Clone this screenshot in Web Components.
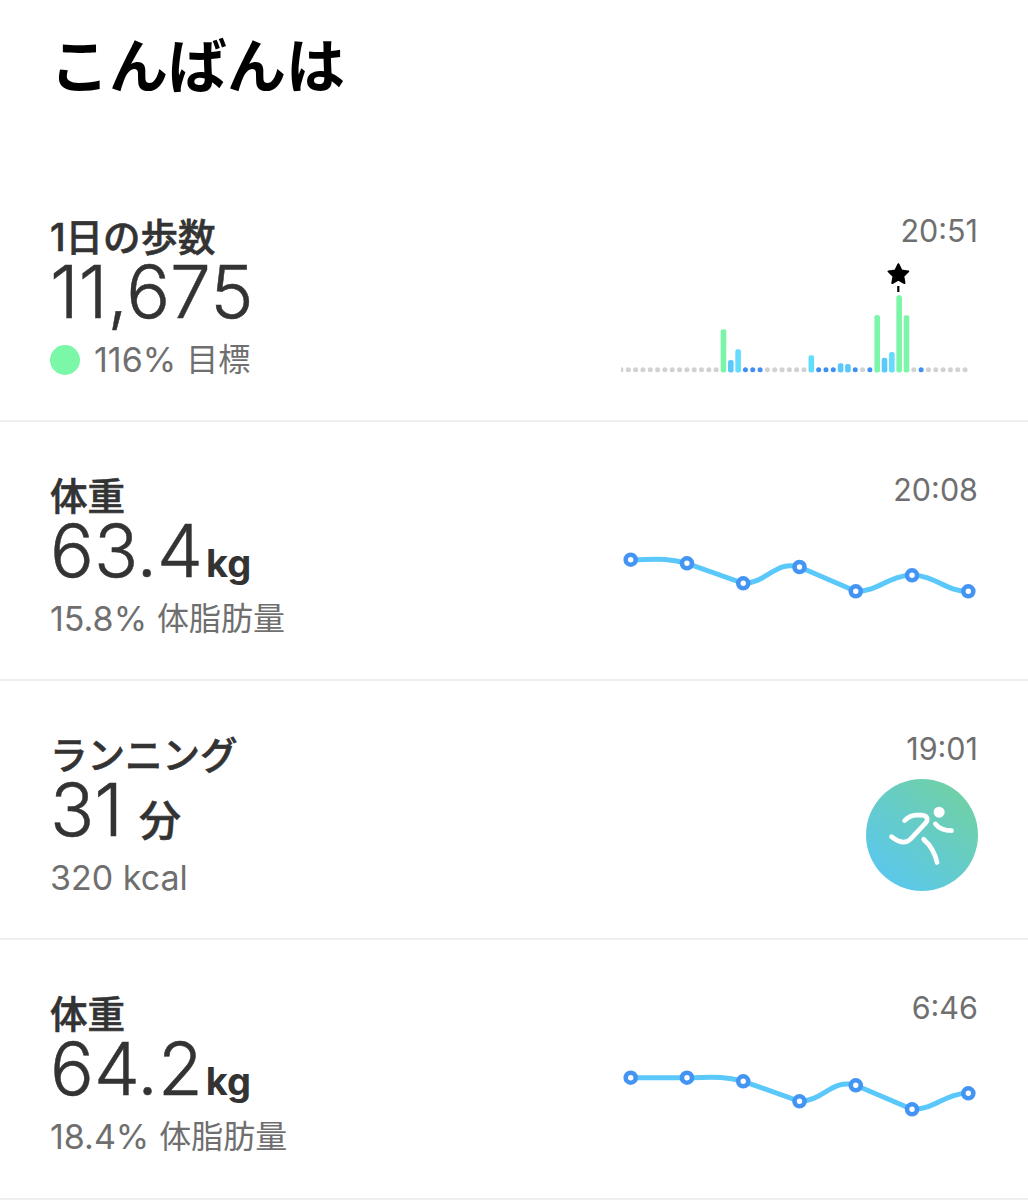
<!DOCTYPE html>
<html lang="ja">
<head>
<meta charset="utf-8">
<title>こんばんは</title>
<style>
	html, body { margin: 0; padding: 0; background: #fff; }
	body { font-family: Inter, "Noto Sans CJK JP", sans-serif; }
</style>
</head>
<body>
<today-page heading="こんばんは">
	<metric-row label="1日の歩数" value="11,675" sub="116%" sub-ja="目標" time="20:51" goal>
		<step-chart slot="chart"></step-chart>
	</metric-row>
	<metric-row label="体重" value="63.4" unit="kg" sub="15.8%" sub-ja="体脂肪量" time="20:08">
		<trend-line slot="chart" values="559.7,563.3,583.3,567,591.3,575.3,591.3"></trend-line>
	</metric-row>
	<metric-row label="ランニング" value="31" unit="分" sub="320 kcal" time="19:01" spaced>
		<run-badge slot="chart"></run-badge>
	</metric-row>
	<metric-row label="体重" value="64.2" unit="kg" sub="18.4%" sub-ja="体脂肪量" time="6:46">
		<trend-line slot="chart" values="1077.7,1077.7,1081.3,1101.3,1085.3,1109.3,1093.3"></trend-line>
	</metric-row>
</today-page>

<script>
const JP = `"Noto Sans CJK JP", sans-serif`

class TodayPage extends HTMLElement {
	constructor() {
		super()
		let shadowRoot = this.attachShadow({mode: 'open'})
		shadowRoot.innerHTML = `
			<style>
				:host { display: block; width: 1028px; }
				h1 {
					margin: 0;
					height: 163px;
					padding: 23px 0 0 50px;
					box-sizing: border-box;
					font: 700 59px/80px ${JP};
					color: #000;
				}
			</style>
			<h1></h1>
			<slot></slot>
		`
		shadowRoot.querySelector("h1").textContent = this.getAttribute("heading")
	}
}

class MetricRow extends HTMLElement {
	constructor() {
		super()
		let shadowRoot = this.attachShadow({mode: 'open'})
		shadowRoot.innerHTML = `
			<style>
				:host {
					display: flex;
					justify-content: space-between;
					height: 259px;
					box-sizing: border-box;
					padding: 0 50px 0 50px;
					border-bottom: 2px solid #eeeeee;
				}
				:host(:last-child) { height: 260px; }
				.left { padding-top: 54px; }
				.label {
					font: 500 37.5px/42px Inter, ${JP};
					-webkit-text-stroke: 0.6px #333;
					color: #333;
					white-space: nowrap;
				}
				.value {
					display: flex;
					align-items: baseline;
					height: 66px;
					font: 300 73px/66px Inter, ${JP};
					color: #333;
					white-space: nowrap;
				}
				.num { -webkit-text-stroke: 0.5px #333; }
				.unit {
					font: 700 38px/66px Inter, ${JP};
					margin-left: 3px;
				}
				.sub {
					display: flex;
					align-items: center;
					margin-top: 13px;
					font: 400 34px/44px Inter, ${JP};
					color: #6f6f6f;
					white-space: nowrap;
				}
				.dot {
					width: 30px;
					height: 30px;
					margin-right: 14px;
					border-radius: 50%;
					background: #7bf7a8;
				}
				.ja {
					font-size: 32px;
					margin-left: 10px;
				}
				.right {
					display: flex;
					flex-direction: column;
					align-items: flex-end;
					padding-top: 48px;
				}
				.time {
					font: 400 30.5px/40px Inter, ${JP};
					color: #6f6f6f;
					white-space: nowrap;
				}
			</style>
			<div class="left">
				<div class="label"></div>
				<div class="value"><span class="num"></span><span class="unit"></span></div>
				<div class="sub"></div>
			</div>
			<div class="right">
				<div class="time"></div>
				<slot name="chart"></slot>
			</div>
		`
		let q = s => shadowRoot.querySelector(s)
		q(".label").textContent = this.getAttribute("label")
		q(".num").textContent = this.getAttribute("value")
		q(".unit").textContent = this.getAttribute("unit") || ""
		if(this.hasAttribute("spaced")){
			q(".unit").style.marginLeft = "16px"
			q(".unit").style.fontSize = "42px"
			q(".unit").style.fontWeight = "500"
			q(".unit").style.webkitTextStroke = "0.6px #333"
		}
		if(this.hasAttribute("goal")){
			let dot = document.createElement("span")
			dot.className = "dot"
			q(".sub").appendChild(dot)
		}
		let text = document.createElement("span")
		text.textContent = this.getAttribute("sub")
		q(".sub").appendChild(text)
		if(this.hasAttribute("sub-ja")){
			let ja = document.createElement("span")
			ja.className = "ja"
			ja.textContent = this.getAttribute("sub-ja")
			q(".sub").appendChild(ja)
		}
		q(".time").textContent = this.getAttribute("time")
	}
}

// one entry per half hour: g gray dot, d blue dot, or [colour, top of bar in chart px]
const GREEN = "#7bf5a8", SKY = "#5ac8fa", CYAN = "#64dcfb", BLUE = "#3e8ff3", GRAY = "#d2d2d2"
const STEPS = [
	"g","g","g","g","g","g","g","g","g","g","g","g","g","g",
	[GREEN,329.3],[SKY,360],[CYAN,349.3],
	"d","d","d","g","g","g","g","g","g",
	[CYAN,355.3],
	"d","d","d",
	[SKY,363.3],[SKY,364],
	"d","g","d",
	[GREEN,315],[SKY,357.7],[CYAN,352],[GREEN,295.3],[GREEN,315.3],
	"g","d","g","g","g","g","g","g"
]

class StepChart extends HTMLElement {
	constructor() {
		super()
		let shadowRoot = this.attachShadow({mode: 'open'})
		let marks = STEPS.map((s, i) => {
			let x = (620.7 + i * 7.32).toFixed(2)
			if(s === "g" || s === "d"){
				return `<circle cx="${x}" cy="369.8" r="2.5" fill="${s === "g" ? GRAY : BLUE}"/>`
			}
			return `<rect x="${(x - 2.8).toFixed(2)}" y="${s[1]}" width="5.6" height="${(372.4 - s[1]).toFixed(1)}" rx="2.2" fill="${s[0]}"/>`
		}).join("")
		shadowRoot.innerHTML = `
			<style>
				:host { display: block; width: 357.3px; height: 117px; margin-top: 7px; }
				svg { display: block; }
			</style>
			<svg width="357.3" height="117" viewBox="620.7 258 357.3 117">
				${marks}
				<path d="M898 292v-6" stroke="#000" stroke-width="2.2" fill="none"/>
				<path d="M898.1 264.2l3 6.3 6.9.9-5 4.8 1.2 6.8-6.1-3.3-6.1 3.3 1.2-6.8-5-4.8 6.9-.9z" fill="#000" stroke="#000" stroke-width="2" stroke-linejoin="round"/>
			</svg>
		`
	}
}

// big drops are straight, the rest ease out of each point
function trendPath(pts) {
	let drop = i => i > 0 && i < pts.length - 1 && pts[i + 1][1] - pts[i][1] >= 19
	let d = `M${pts[0][0]} ${pts[0][1]}`
	for(let i = 0; i < pts.length - 1; i++){
		let a = pts[i], b = pts[i + 1]
		if(drop(i)){
			d += `L${b[0]} ${b[1]}`
			continue
		}
		let h = (b[0] - a[0]) * 0.42
		let end = drop(i + 1) ? (pts[i + 2][1] - b[1]) / (pts[i + 2][0] - b[0]) * 0.7 : 0
		d += `C${a[0] + h} ${a[1]} ${b[0] - h} ${b[1] - end * h} ${b[0]} ${b[1]}`
	}
	return d
}

class TrendLine extends HTMLElement {
	constructor() {
		super()
		let shadowRoot = this.attachShadow({mode: 'open'})
		let ys = this.getAttribute("values").split(",").map(Number)
		let base = Math.floor(ys[0]) - 49
		let pts = ys.map((y, i) => [+(12.7 + i * 56.27).toFixed(2), +(y - base).toFixed(2)])
		let dots = pts.map(p => `<circle cx="${p[0]}" cy="${p[1]}" r="5" fill="#fff" stroke="#4495f3" stroke-width="4.6"/>`).join("")
		shadowRoot.innerHTML = `
			<style>
				:host { display: block; width: 360px; height: 90px; }
				svg { display: block; }
			</style>
			<svg width="360" height="90" viewBox="0 0 360 90">
				<path d="${trendPath(pts)}" fill="none" stroke="#5ac8fa" stroke-width="5"/>
				${dots}
			</svg>
		`
	}
}

class RunBadge extends HTMLElement {
	constructor() {
		super()
		let shadowRoot = this.attachShadow({mode: 'open'})
		shadowRoot.innerHTML = `
			<style>
				:host { display: block; width: 112px; height: 112px; margin-top: 10px; }
				svg { display: block; }
			</style>
			<svg width="112" height="112" viewBox="50 26 334 334">
				<defs>
					<linearGradient id="g" x1="0.2" y1="0.9" x2="0.85" y2="0.15">
						<stop offset="0" stop-color="#5bc8ea"/>
						<stop offset="1" stop-color="#6fd0a8"/>
					</linearGradient>
				</defs>
				<circle cx="217" cy="193" r="167" fill="url(#g)"/>
				<circle cx="268" cy="125" r="16.5" fill="#fff"/>
				<g fill="none" stroke="#fff" stroke-width="14" stroke-linecap="round" stroke-linejoin="round">
					<path d="M165 150C175 140 186 134 200 134L217 134C232 135 237 146 228 157L182 206C168 219 148 216 126 198"/>
					<path d="M257 160C266 172 280 180 305 180"/>
					<path d="M222 206C244 225 256 248 262 275"/>
				</g>
			</svg>
		`
	}
}

customElements.define("today-page", TodayPage)
customElements.define("metric-row", MetricRow)
customElements.define("step-chart", StepChart)
customElements.define("trend-line", TrendLine)
customElements.define("run-badge", RunBadge)
</script>
</body>
</html>
